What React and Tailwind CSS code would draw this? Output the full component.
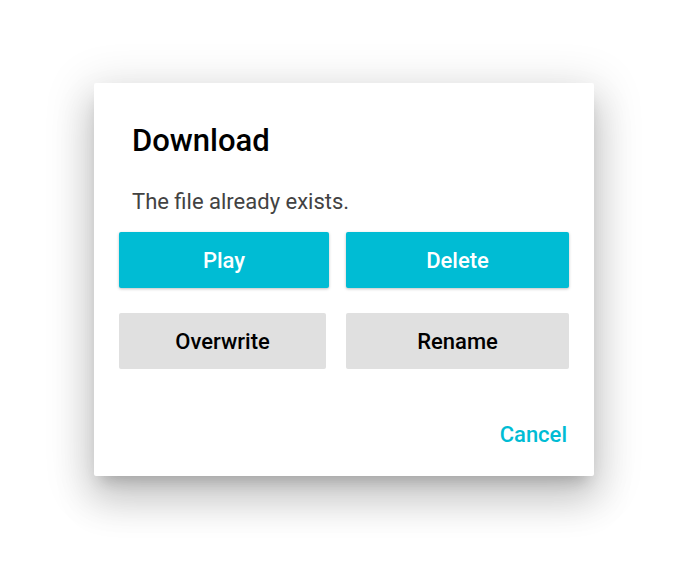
import React from "react";

const font = { fontFamily: "Roboto, 'Noto Sans', sans-serif" };

export default function App() {
  return (
    <div className="min-h-[577px] w-[698px] bg-white pl-[94px] pt-[83px]" style={font}>
      {/* Dialog */}
      <div className="flex h-[393px] w-[500px] flex-col rounded-[2px] bg-white shadow-[0_11px_15px_-7px_rgba(0,0,0,0.2),0_24px_38px_3px_rgba(0,0,0,0.14),0_9px_46px_8px_rgba(0,0,0,0.12)]">
        <h2 className="mt-[40px] pl-[38px] text-[31px] font-medium leading-[36px] text-black">Download</h2>
        <p className="mt-[30px] pl-[38px] text-[22px] leading-[26px] text-[#424242]">The file already exists.</p>

        <div className="mt-[17px] flex pl-[25px]">
          <button className="h-[56px] w-[210px] rounded-[2px] bg-[#00bcd4] text-[22px] font-medium text-white shadow-[0_1px_3px_rgba(0,0,0,0.25)]">
            Play
          </button>
          <button className="ml-[17px] h-[56px] w-[223px] rounded-[2px] bg-[#00bcd4] text-[22px] font-medium text-white shadow-[0_1px_3px_rgba(0,0,0,0.25)]">
            Delete
          </button>
        </div>

        <div className="mt-[25px] flex pl-[25px]">
          <button className="h-[56px] w-[207px] rounded-[2px] bg-[#e0e0e0] text-[22px] font-medium text-black">
            Overwrite
          </button>
          <button className="ml-[20px] h-[56px] w-[223px] rounded-[2px] bg-[#e0e0e0] text-[22px] font-medium text-black">
            Rename
          </button>
        </div>

        <div className="mt-[53px] flex justify-end pr-[27px]">
          <button className="text-[22px] font-medium leading-[26px] text-[#00bcd4]">Cancel</button>
        </div>
      </div>
    </div>
  );
}
